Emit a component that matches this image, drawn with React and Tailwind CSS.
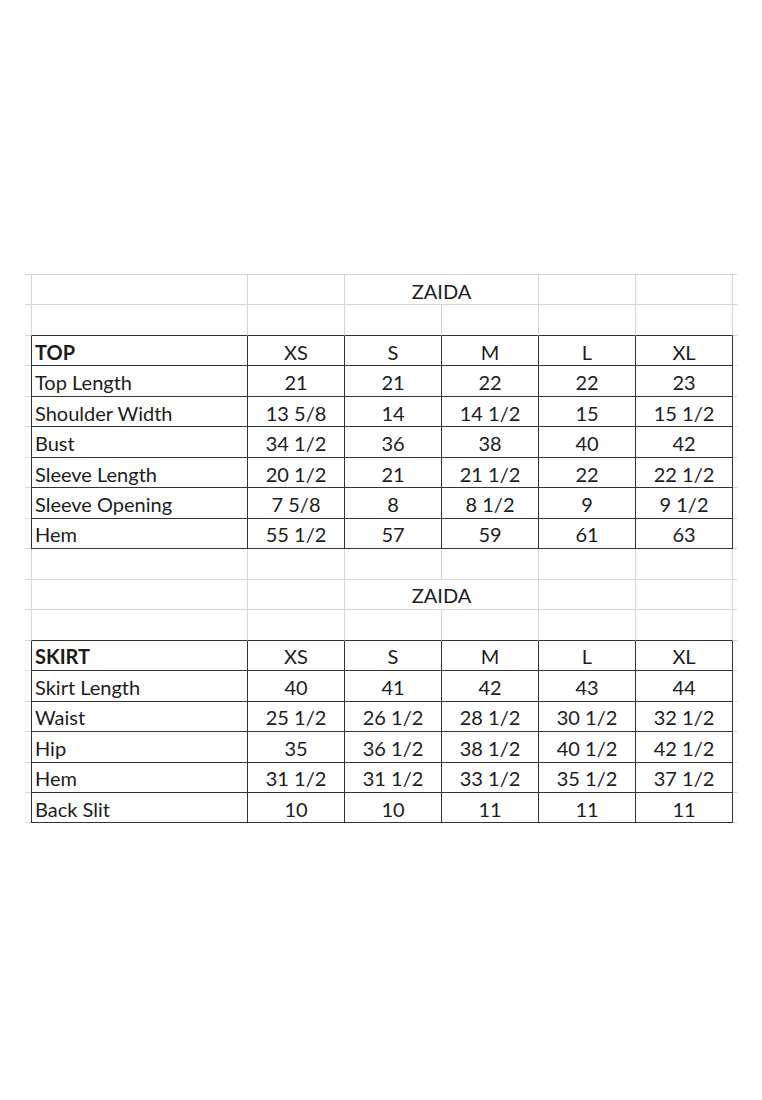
import React from 'react';

const SIZES = ['XS', 'S', 'M', 'L', 'XL'];

const topRows = [
  ['Top Length', '21', '21', '22', '22', '23'],
  ['Shoulder Width', '13 5/8', '14', '14 1/2', '15', '15 1/2'],
  ['Bust', '34 1/2', '36', '38', '40', '42'],
  ['Sleeve Length', '20 1/2', '21', '21 1/2', '22', '22 1/2'],
  ['Sleeve Opening', '7 5/8', '8', '8 1/2', '9', '9 1/2'],
  ['Hem', '55 1/2', '57', '59', '61', '63'],
];

const skirtRows = [
  ['Skirt Length', '40', '41', '42', '43', '44'],
  ['Waist', '25 1/2', '26 1/2', '28 1/2', '30 1/2', '32 1/2'],
  ['Hip', '35', '36 1/2', '38 1/2', '40 1/2', '42 1/2'],
  ['Hem', '31 1/2', '31 1/2', '33 1/2', '35 1/2', '37 1/2'],
  ['Back Slit', '10', '10', '11', '11', '11'],
];

// empty sheet row, bottom line can be dark when a table starts under it
function BlankRow({ darkBottom }) {
  const b = darkBottom ? 'border-b-[#333333]' : 'border-b-[#d6d6d6]';
  return (
    <div className="flex h-[30.47px]">
      <div className="w-[6px] border-b border-[#d6d6d6]" />
      <div className={`w-[217px] border-l border-r border-b border-l-[#d6d6d6] border-r-[#d6d6d6] ${b}`} />
      {SIZES.map((s) => (
        <div key={s} className={`w-[97px] border-r border-b border-r-[#d6d6d6] ${b}`} />
      ))}
      <div className="w-[4px] border-b border-[#d6d6d6]" />
    </div>
  );
}

function TitleRow() {
  return (
    <div className="flex h-[30.47px]">
      <div className="w-[6px] border-b border-[#d6d6d6]" />
      <div className="w-[217px] border-l border-r border-b border-[#d6d6d6]" />
      <div className="w-[97px] border-r border-b border-[#d6d6d6]" />
      <div className="w-[194px] border-r border-b border-[#d6d6d6] flex items-center justify-center pt-[2px]">
        ZAIDA
      </div>
      <div className="w-[97px] border-r border-b border-[#d6d6d6]" />
      <div className="w-[97px] border-r border-b border-[#d6d6d6]" />
      <div className="w-[4px] border-b border-[#d6d6d6]" />
    </div>
  );
}

function DataRow({ cells, bold }) {
  return (
    <div className="flex h-[30.47px]">
      <div className="w-[6px] border-b border-[#d6d6d6]" />
      <div
        className={`w-[217px] border-l border-r border-b border-[#333333] flex items-center pl-[3px] pt-[2px] ${
          bold ? 'font-bold' : ''
        }`}
      >
        {cells[0]}
      </div>
      {cells.slice(1).map((c, i) => (
        <div key={i} className="w-[97px] border-r border-b border-[#333333] flex items-center justify-center pt-[2px]">
          {c}
        </div>
      ))}
      <div className="w-[4px] border-b border-[#d6d6d6]" />
    </div>
  );
}

export default function App() {
  return (
    <div className="w-[762px] h-[1100px] bg-white text-[#1c1c1c] text-[20px] leading-none" style={{ fontFamily: 'Lato, "Open Sans", sans-serif' }}>
      <div className="pt-[274px] pl-[25px]">
        <div className="w-[712px] border-t border-[#d6d6d6]">
          <TitleRow />
          <BlankRow darkBottom />
          <DataRow cells={['TOP', ...SIZES]} bold />
          {topRows.map((r) => (
            <DataRow key={r[0]} cells={r} />
          ))}
          <BlankRow />
          <TitleRow />
          <BlankRow darkBottom />
          <DataRow cells={['SKIRT', ...SIZES]} bold />
          {skirtRows.map((r, i) => (
            <DataRow key={i} cells={r} />
          ))}
        </div>
      </div>
    </div>
  );
}
